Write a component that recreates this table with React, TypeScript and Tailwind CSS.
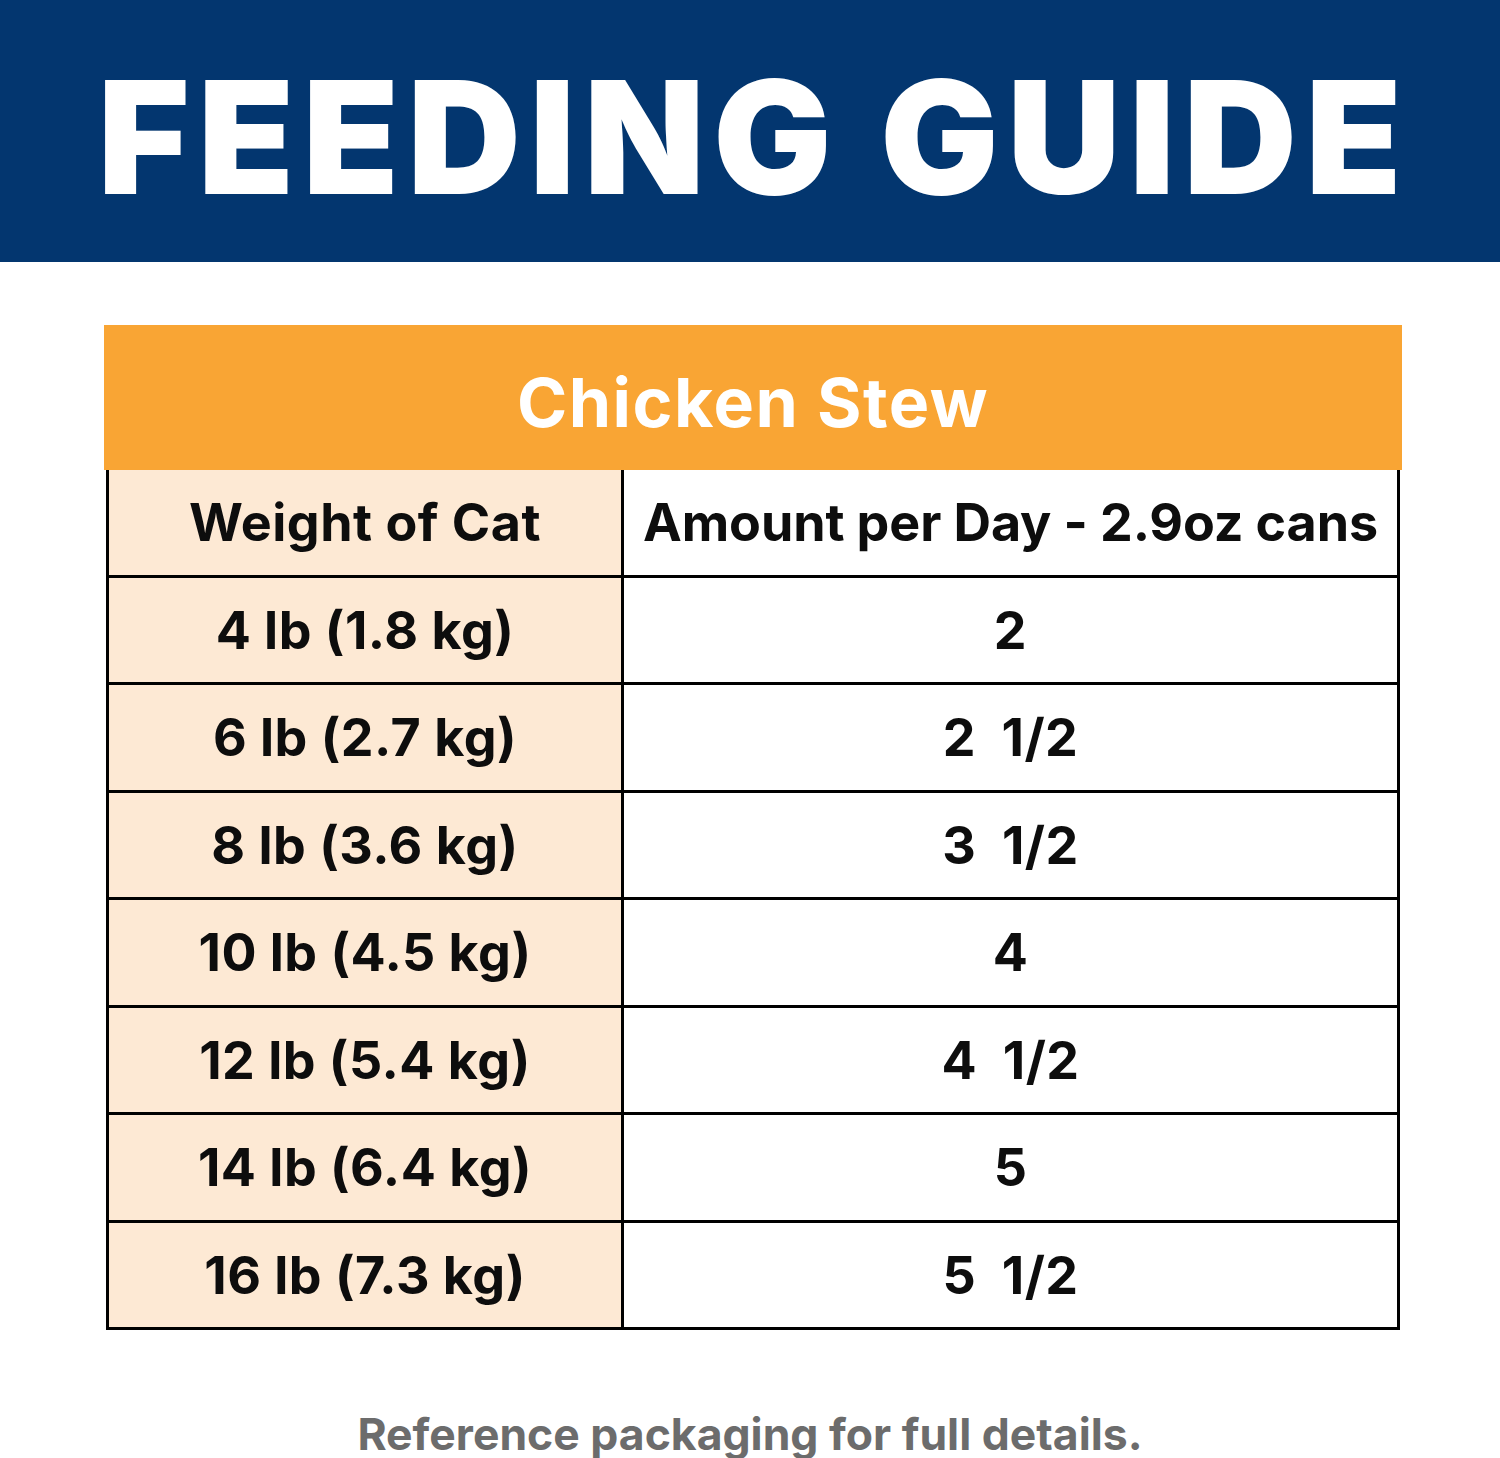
import React from 'react'

const rows = [
  { weight: '4 lb (1.8 kg)', amount: '2' },
  { weight: '6 lb (2.7 kg)', amount: '2\u00a0\u00a01/2' },
  { weight: '8 lb (3.6 kg)', amount: '3\u00a0\u00a01/2' },
  { weight: '10 lb (4.5 kg)', amount: '4' },
  { weight: '12 lb (5.4 kg)', amount: '4\u00a0\u00a01/2' },
  { weight: '14 lb (6.4 kg)', amount: '5' },
  { weight: '16 lb (7.3 kg)', amount: '5\u00a0\u00a01/2' },
]

function Row({ left, right, tight }: { left: string; right: string; tight?: boolean }) {
  return (
    <div className="flex h-[107.5px] border-b-[3px] border-black">
      <div className="flex w-[515px] shrink-0 items-center justify-center border-r-[3px] border-black bg-[#fde9d4] pt-[2px]">
        {left}
      </div>
      <div
        className={
          tight
            ? 'flex flex-1 items-center justify-center bg-white pt-[2px] tracking-[-0.1px]'
            : 'flex flex-1 items-center justify-center bg-white pt-[2px]'
        }
      >
        {right}
      </div>
    </div>
  )
}

export default function App() {
  return (
    <div className="flex min-h-[1458px] w-full flex-col bg-white font-['Inter','Liberation_Sans',sans-serif]">
      <header className="flex h-[262px] items-center justify-center bg-[#03366f] pt-[12px] pl-[8px]">
        <h1 className="text-[157px] leading-none font-black tracking-[8.6px] text-white">FEEDING GUIDE</h1>
      </header>

      <main className="mt-[63px] ml-[104px] w-[1298px]">
        <div className="flex h-[145px] items-center justify-center bg-[#f9a534] pt-[8px]">
          <h2 className="text-[68px] leading-none font-bold tracking-[1.5px] text-white">Chicken Stew</h2>
        </div>
        <div className="mx-[2px] border-x-[3px] border-black text-[52px] leading-none font-bold tracking-[0.5px] text-[#0d0d0d]">
          <Row left="Weight of Cat" right="Amount per Day - 2.9oz cans" tight />
          {rows.map((r) => (
            <Row key={r.weight} left={r.weight} right={r.amount} />
          ))}
        </div>
      </main>

      <footer className="flex flex-1 items-center justify-center pt-[80px]">
        <p className="text-[44.5px] leading-none font-bold text-[#6c6c6c]">
          Reference packaging for full details.
        </p>
      </footer>
    </div>
  )
}
